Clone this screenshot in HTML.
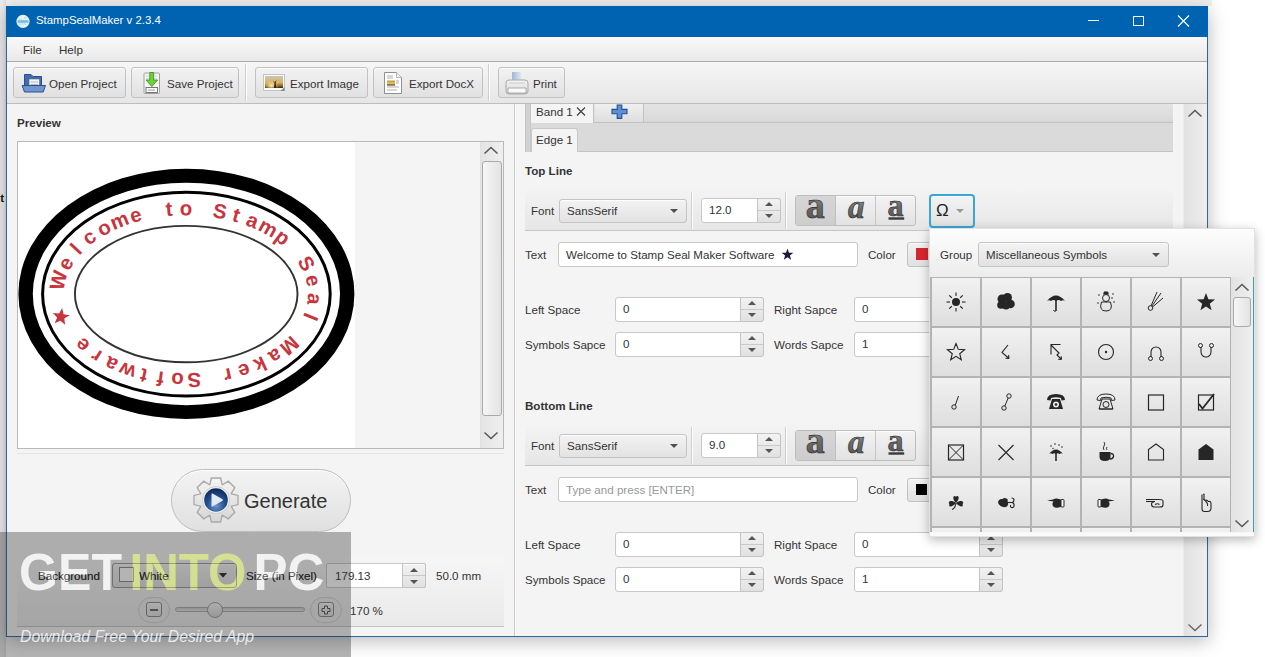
<!DOCTYPE html>
<html><head><meta charset="utf-8">
<style>
*{box-sizing:border-box;margin:0;padding:0}
html,body{width:1265px;height:657px;overflow:hidden;background:#fff;font-family:"Liberation Sans",sans-serif;font-size:11.6px;color:#333}
.a{position:absolute}
#bgl{left:0;top:0;width:6px;height:657px;background:linear-gradient(90deg,#ececef 55%,#dcdce0)}
#bgt{left:0;top:0;width:1212px;height:6px;background:#f0f0f0}
#win{left:6px;top:6px;width:1202px;height:631px;background:#f4f4f4;border:1px solid #2a6aa0;border-top:none;box-shadow:0 4px 18px rgba(0,0,0,.28)}
#title{left:6px;top:6px;width:1202px;height:31px;background:#0063b1;color:#fff;font-size:12px}
#menu{left:7px;top:37px;width:1200px;height:25px;background:linear-gradient(#f9f9f9,#e9e9e9);border-bottom:1px solid #aaa}
#tool{left:7px;top:62px;width:1200px;height:42px;background:linear-gradient(#f6f6f6,#e6e6e6);border-bottom:1px solid #bdbdbd}
.btn{position:absolute;border:1px solid #c2c2c2;border-radius:3px;background:linear-gradient(#f2f2f2,#e1e1e1);box-shadow:inset 0 1px 0 rgba(255,255,255,.7)}
.tb{top:67px;height:31px;font-size:11.6px;color:#333;line-height:29px}
.sep{position:absolute;width:2px;border-left:1px solid #cfcfcf;border-right:1px solid #fff}
.lbl{position:absolute;white-space:pre;color:#333}
.bold{font-weight:bold}
.field{position:absolute;background:#fff;border:1px solid #c8c8c8;border-radius:2px}

.cmb{position:absolute;border:1px solid #c4c4c4;border-radius:3px;background:linear-gradient(#f3f3f3,#e2e2e2);box-shadow:inset 0 1px 0 rgba(255,255,255,.8)}
.arr{position:absolute;width:0;height:0;border-left:4px solid transparent;border-right:4px solid transparent;border-top:4px solid #505050}
.spbtn{position:absolute;border:1px solid #c4c4c4;border-radius:0 3px 3px 0;background:linear-gradient(#f2f2f2,#e1e1e1)}
.up{position:absolute;width:0;height:0;border-left:4px solid transparent;border-right:4px solid transparent;border-bottom:4px solid #555}
.dn{position:absolute;width:0;height:0;border-left:4px solid transparent;border-right:4px solid transparent;border-top:4px solid #555}
</style></head><body>
<div class="a" id="bgt"></div>
<div class="a" id="bgl"></div>
<div class="a" id="win"></div>
<div class="lbl" style="left:-3px;top:191px;font-weight:bold;color:#111">it</div>
<div class="a" id="title">
  <svg class="a" style="left:10px;top:8px" width="15" height="15" viewBox="0 0 15 15"><circle cx="7" cy="7.3" r="6.6" fill="#e2f5fb"/><path d="M1.5 6.2h11v2.6h-11z" fill="#7fb9dc"/><path d="M3 5h3M8 4h3M3 10h7" stroke="#9fd2ea" stroke-width="0.8"/></svg>
  <div class="lbl" style="left:30px;top:8px;color:#fff;font-size:11.4px">StampSealMaker v 2.3.4</div>
  <div class="a" style="left:1082px;top:14px;width:11px;height:1px;background:#fff"></div>
  <div class="a" style="left:1127px;top:10px;width:11px;height:10px;border:1px solid #fff"></div>
  <svg class="a" style="left:1171px;top:9px" width="13" height="12"><path d="M1 0.5L12 11.5M12 0.5L1 11.5" stroke="#fff" stroke-width="1.1"/></svg>
</div>
<div class="a" id="menu">
  <div class="lbl" style="left:16px;top:6px">File</div>
  <div class="lbl" style="left:52px;top:6px">Help</div>
</div>
<div class="a" id="tool"></div>
<div class="btn tb" style="left:13px;width:113px"></div>
<div class="btn tb" style="left:131px;width:108px"></div>
<div class="sep" style="left:245px;top:64px;height:37px"></div>
<div class="btn tb" style="left:255px;width:113px"></div>
<div class="btn tb" style="left:373px;width:110px"></div>
<div class="sep" style="left:488px;top:64px;height:37px"></div>
<div class="btn tb" style="left:498px;width:67px"></div>
<!-- toolbar icons -->
<svg class="a" style="left:21px;top:72px" width="26" height="22" viewBox="0 0 26 22">
  <path d="M3.5 2.5h6.5l2 2h8.5v10H3.5z" fill="#3f6db5" stroke="#2a4f8c" stroke-width="1"/>
  <rect x="8" y="7" width="10.5" height="9" fill="#f4f6f8" stroke="#666" stroke-width="0.6"/>
  <path d="M9.5 10h7.5M9.5 12.5h7.5" stroke="#9ab" stroke-width="0.8"/>
  <path d="M1.2 13.5h23.3l-2.3 6.5H3.5z" fill="#7096cc" stroke="#2c4f8a" stroke-width="1"/>
</svg>
<div class="lbl" style="left:49px;top:77px">Open Project</div>
<svg class="a" style="left:143px;top:72px" width="18" height="22" viewBox="0 0 18 22">
  <rect x="1" y="1" width="15.5" height="20.5" rx="1" fill="#f4f4f4" stroke="#a0a0a0" stroke-width="1"/>
  <path d="M3 4h11M3 6.5h11" stroke="#cfcfcf" stroke-width="0.8"/>
  <path d="M6.8 0.5h3.8v7.5h4l-5.8 6.5l-5.8-6.5h3.8z" fill="#6fcf3c" stroke="#3d9a1e" stroke-width="0.9"/>
  <rect x="3" y="15.5" width="11.5" height="5" fill="#fafafa" stroke="#6a6a6a" stroke-width="0.9"/>
  <path d="M5 18h7" stroke="#888" stroke-width="0.8"/>
</svg>
<div class="lbl" style="left:167px;top:77px">Save Project</div>
<svg class="a" style="left:263px;top:74px" width="24" height="18" viewBox="0 0 24 18">
  <rect x="0.5" y="0.5" width="21" height="16" fill="#fbfbf8" stroke="#c4c4c4" stroke-width="1"/>
  <defs><linearGradient id="sun" x1="0" y1="0" x2="0" y2="1"><stop offset="0" stop-color="#c9c6bc"/><stop offset=".55" stop-color="#d9b260"/><stop offset=".85" stop-color="#7a5a20"/><stop offset="1" stop-color="#2a2008"/></linearGradient>
  <radialGradient id="glow" cx="0.35" cy="0.8" r="0.45"><stop offset="0" stop-color="#fff4c0" stop-opacity="1"/><stop offset="1" stop-color="#f0c060" stop-opacity="0"/></radialGradient></defs>
  <rect x="2" y="2" width="18" height="12" fill="url(#sun)"/>
  <rect x="2" y="2" width="18" height="12" fill="url(#glow)"/>
  <path d="M11 14l0.6-5l-1.8-2.5l2.2 1.8l1.5-2.5l-0.8 3.2l0.6 5z" fill="#2e2410"/>
  <path d="M17.5 17l4-4v4z" fill="#8a8a8a"/>
</svg>
<div class="lbl" style="left:290px;top:77px">Export Image</div>
<svg class="a" style="left:384px;top:72px" width="19" height="22" viewBox="0 0 19 22">
  <path d="M0.5 0.5h12l5 5v16H0.5z" fill="#fff" stroke="#8f8f8f" stroke-width="1"/>
  <path d="M12.5 0.5v5h5" fill="#eee" stroke="#aaa" stroke-width="0.8"/>
  <path d="M3 4h6M3 6h6M12 9h3M12 11h3M3 15h12M3 18h10" stroke="#999" stroke-width="0.8"/>
  <defs><linearGradient id="sun2" x1="0" y1="0" x2="0" y2="1"><stop offset="0" stop-color="#b99a4a"/><stop offset=".6" stop-color="#e8c060"/><stop offset="1" stop-color="#3a2a10"/></linearGradient></defs>
  <rect x="3" y="8.5" width="8" height="5" fill="url(#sun2)"/>
</svg>
<div class="lbl" style="left:409px;top:77px">Export DocX</div>
<svg class="a" style="left:505px;top:71px" width="24" height="25" viewBox="0 0 24 25">
  <defs><linearGradient id="pap" x1="0" y1="0" x2="1" y2="0"><stop offset="0" stop-color="#9db8d8"/><stop offset="1" stop-color="#dce8f2"/></linearGradient>
  <linearGradient id="prb" x1="0" y1="0" x2="0" y2="1"><stop offset="0" stop-color="#f4f4f4"/><stop offset="1" stop-color="#d8d8d8"/></linearGradient></defs>
  <rect x="7" y="1" width="9" height="8" fill="url(#pap)"/>
  <rect x="1" y="9" width="22" height="14" rx="3" fill="url(#prb)" stroke="#aaa" stroke-width="1"/>
  <path d="M3 17h18v5H3z" fill="#fafafa" stroke="#999" stroke-width="0.8"/>
  <path d="M4 12h16" stroke="#ccc" stroke-width="1"/>
</svg>
<div class="lbl" style="left:533px;top:77px">Print</div>

<!-- LEFT PANEL -->
<div class="a" style="left:514px;top:104px;width:1px;height:532px;background:#c8c8c8"></div>
<div class="a" style="left:515px;top:104px;width:1px;height:532px;background:#fbfbfb"></div>
<div class="lbl bold" style="left:17px;top:116px">Preview</div>
<div class="a" style="left:17px;top:141px;width:487px;height:308px;border:1px solid #b9b9b9;background:#f4f4f4"></div>
<div class="a" style="left:18px;top:142px;width:337px;height:306px;background:#fff"></div>
<svg class="a" style="left:0;top:0" width="360" height="450" viewBox="0 0 360 450">
  <path fill-rule="evenodd" fill="#000" d="M18.4,293.9 a168,125.1 0 1,0 336,0 a168,125.1 0 1,0 -336,0 Z M32.8,293.9 a153.6,111.2 0 1,0 307.2,0 a153.6,111.2 0 1,0 -307.2,0 Z"/>
  <ellipse cx="186.4" cy="294.1" rx="143.8" ry="101.9" fill="none" stroke="#000" stroke-width="3"/>
  <ellipse cx="186.2" cy="294.1" rx="111.3" ry="68.2" fill="none" stroke="#333" stroke-width="1.9"/>
  <g fill="#c9343d" font-family="Liberation Sans" font-weight="bold" font-size="20.4">
<text transform="translate(65.37,281.96) rotate(-76.39)" text-anchor="middle">W</text>
<text transform="translate(71.44,266.86) rotate(-60.33)" text-anchor="middle">e</text>
<text transform="translate(81.18,253.67) rotate(-47.29)" text-anchor="middle">l</text>
<text transform="translate(93.38,242.71) rotate(-36.99)" text-anchor="middle">c</text>
<text transform="translate(107.11,233.89) rotate(-28.71)" text-anchor="middle">o</text>
<text transform="translate(121.99,226.91) rotate(-21.71)" text-anchor="middle">m</text>
<text transform="translate(137.45,221.70) rotate(-15.65)" text-anchor="middle">e</text>
<text transform="translate(169.66,215.90) rotate(-4.97)" text-anchor="middle">t</text>
<text transform="translate(186.09,215.20) rotate(0.06)" text-anchor="middle">o</text>
<text transform="translate(218.65,218.10) rotate(10.23)" text-anchor="middle">S</text>
<text transform="translate(234.53,221.75) rotate(15.72)" text-anchor="middle">t</text>
<text transform="translate(249.97,226.97) rotate(21.78)" text-anchor="middle">a</text>
<text transform="translate(264.84,233.97) rotate(28.79)" text-anchor="middle">m</text>
<text transform="translate(278.54,242.80) rotate(37.08)" text-anchor="middle">p</text>
<text transform="translate(300.43,266.97) rotate(60.45)" text-anchor="middle">S</text>
<text transform="translate(306.46,282.09) rotate(76.52)" text-anchor="middle">e</text>
<text transform="translate(307.74,298.29) rotate(94.58)" text-anchor="middle">a</text>
<text transform="translate(303.92,314.21) rotate(112.01)" text-anchor="middle">l</text>
<text transform="translate(284.82,340.43) rotate(138.10)" text-anchor="middle">M</text>
<text transform="translate(271.76,350.32) rotate(147.32)" text-anchor="middle">a</text>
<text transform="translate(257.45,358.19) rotate(154.88)" text-anchor="middle">k</text>
<text transform="translate(242.14,364.31) rotate(161.41)" text-anchor="middle">e</text>
<text transform="translate(226.50,368.70) rotate(167.13)" text-anchor="middle">r</text>
<text transform="translate(193.94,373.03) rotate(177.55)" text-anchor="middle">S</text>
<text transform="translate(177.67,373.02) rotate(-177.49)" text-anchor="middle">o</text>
<text transform="translate(161.35,371.58) rotate(-172.42)" text-anchor="middle">f</text>
<text transform="translate(145.12,368.65) rotate(-167.06)" text-anchor="middle">t</text>
<text transform="translate(129.49,364.25) rotate(-161.34)" text-anchor="middle">w</text>
<text transform="translate(114.19,358.11) rotate(-154.80)" text-anchor="middle">a</text>
<text transform="translate(99.90,350.24) rotate(-147.24)" text-anchor="middle">r</text>
<text transform="translate(86.86,340.33) rotate(-138.01)" text-anchor="middle">e</text>
<polygon transform="translate(60.87,316.88)" points="1.25,-8.91 2.64,-2.73 8.86,-1.56 3.42,1.67 4.23,7.95 -0.53,3.76 -6.25,6.47 -3.74,0.66 -8.09,-3.95 -1.78,-3.36" fill="#c9343d"/>
  </g>
</svg>
<!-- preview scrollbar -->
<div class="a" style="left:480px;top:142px;width:23px;height:306px;background:linear-gradient(90deg,#e4e4e4,#efefef);border-left:1px solid #e0e0e0"></div>
<svg class="a" style="left:482px;top:144px" width="18" height="12" viewBox="0 0 18 12"><path d="M2.5 9.5L9 3.5L15.5 9.5" fill="none" stroke="#5a5a5a" stroke-width="1.6"/></svg>
<div class="a" style="left:482px;top:161px;width:20px;height:255px;border:1px solid #a9a9a9;border-radius:3px;background:linear-gradient(90deg,#f6f6f6,#e3e3e3)"></div>
<svg class="a" style="left:482px;top:430px" width="18" height="12" viewBox="0 0 18 12"><path d="M2.5 2.5L9 8.5L15.5 2.5" fill="none" stroke="#5a5a5a" stroke-width="1.6"/></svg>
<div class="a" style="left:17px;top:453px;width:487px;height:1px;background:#e6e6e6"></div>
<!-- generate -->
<div class="a" style="left:171px;top:469px;width:180px;height:63px;border:1px solid #bdbdbd;border-radius:32px;background:linear-gradient(#f3f3f3,#e0e0e0);box-shadow:inset 0 1px 0 #fff"></div>
<svg class="a" style="left:191px;top:475px" width="50" height="50" viewBox="-25 -25 50 50">
  <defs><radialGradient id="bl" cx="0.5" cy="0.75" r="0.7"><stop offset="0" stop-color="#6f95c8"/><stop offset=".55" stop-color="#24508f"/><stop offset="1" stop-color="#0f2d5e"/></radialGradient>
  <linearGradient id="gr" x1="0" y1="0" x2="0" y2="1"><stop offset="0" stop-color="#f4f4f4"/><stop offset="1" stop-color="#d6d6d6"/></linearGradient></defs>
  <path fill="url(#gr)" stroke="#a9a9a9" stroke-width="1.3" d="M15.29,-6.20 L22.02,-4.60 L22.02,4.60 L15.29,6.20 A16.5,16.5 0 0,1 15.20,6.43 L18.83,12.32 L12.32,18.83 L6.43,15.20 A16.5,16.5 0 0,1 6.20,15.29 L4.60,22.02 L-4.60,22.02 L-6.20,15.29 A16.5,16.5 0 0,1 -6.43,15.20 L-12.32,18.83 L-18.83,12.32 L-15.20,6.43 A16.5,16.5 0 0,1 -15.29,6.20 L-22.02,4.60 L-22.02,-4.60 L-15.29,-6.20 A16.5,16.5 0 0,1 -15.20,-6.43 L-18.83,-12.32 L-12.32,-18.83 L-6.43,-15.20 A16.5,16.5 0 0,1 -6.20,-15.29 L-4.60,-22.02 L4.60,-22.02 L6.20,-15.29 A16.5,16.5 0 0,1 6.43,-15.20 L12.32,-18.83 L18.83,-12.32 L15.20,-6.43 A16.5,16.5 0 0,1 15.29,-6.20 Z"/>
  <circle r="13.5" fill="#eef0f2" stroke="#c8c8c8" stroke-width="0.8"/>
  <circle r="11.8" fill="url(#bl)"/>
  <path d="M-3.5,-6.5 Q-4.5,-7 -4.5,-5.5 L-4.5,5.5 Q-4.5,7 -3.5,6.5 L6.5,0.8 Q7.5,0 6.5,-0.8 Z" fill="#e4eaf2"/>
</svg>
<div class="lbl" style="left:244px;top:490px;font-size:20px;color:#333">Generate</div>
<!-- bottom bar -->
<div class="a" style="left:17px;top:557px;width:487px;height:70px;background:linear-gradient(#f6f6f6,#e9e9e9);border-bottom:1px solid #c4c4c4"></div>
<div class="lbl" style="left:38px;top:569px">Background</div>
<div class="btn" style="left:112px;top:563px;width:125px;height:25px"></div>
<div class="a" style="left:119px;top:567px;width:15px;height:15px;background:#fff;border:1px solid #aaa"></div>
<div class="lbl" style="left:139px;top:569px">White</div>
<svg class="a" style="left:219px;top:573px" width="9" height="5"><path d="M0 0h8l-4 4.5z" fill="#444"/></svg>
<div class="lbl" style="left:246px;top:569px">Size (in Pixel)</div>
<div class="field" style="left:326px;top:563px;width:100px;height:25px"></div>
<div class="lbl" style="left:335px;top:569px">179.13</div>
<div class="btn" style="left:402px;top:563px;width:24px;height:25px;border-radius:0 2px 2px 0"></div>
<div class="a" style="left:403px;top:575px;width:22px;height:1px;background:#c8c8c8"></div>
<svg class="a" style="left:409px;top:567px" width="10" height="18"><path d="M1 5h8l-4-4z" fill="#555"/><path d="M1 13h8l-4 4z" fill="#555"/></svg>
<div class="lbl" style="left:436px;top:569px">50.0 mm</div>
<div class="a" style="left:138px;top:597px;width:32px;height:26px;border-radius:13px;border:1px solid #d0d0d0;background:#ececec"></div>
<div class="btn" style="left:146px;top:602px;width:16px;height:15px;border-color:#888;border-radius:3px"></div>
<div class="a" style="left:150px;top:609px;width:8px;height:2px;border:1px solid #666"></div>
<div class="a" style="left:175px;top:607px;width:130px;height:5px;border-radius:3px;background:linear-gradient(#c9c9c9,#e2e2e2);border:1px solid #aaa"></div>
<div class="a" style="left:207px;top:602px;width:16px;height:16px;border-radius:50%;border:1px solid #999;background:linear-gradient(#f4f4f4,#d4d4d4)"></div>
<div class="a" style="left:310px;top:597px;width:32px;height:26px;border-radius:13px;border:1px solid #d0d0d0;background:#ececec"></div>
<div class="btn" style="left:318px;top:602px;width:16px;height:15px;border-color:#888;border-radius:3px"></div>
<svg class="a" style="left:321px;top:605px" width="10" height="10"><path d="M3.5 1h3v2.5H9v3H6.5V9h-3V6.5H1v-3h2.5z" fill="none" stroke="#555" stroke-width="1"/></svg>
<div class="lbl" style="left:350px;top:604px">170 %</div>

<!-- RIGHT PANEL -->
<div class="a" style="left:525px;top:104px;width:648px;height:19px;background:linear-gradient(#e4e4e4,#d8d8d8);border-bottom:1px solid #c2c2c2"></div>
<div class="a" style="left:525px;top:104px;width:6px;height:48px;background:#d2d2d2;border-left:1px solid #c6c6c6;border-right:1px solid #c6c6c6"></div>
<div class="a" style="left:531px;top:104px;width:63px;height:19px;background:#f4f4f4;border-right:1px solid #c6c6c6"></div>
<div class="lbl" style="left:536px;top:105px">Band 1</div>
<svg class="a" style="left:576px;top:107px" width="10" height="9"><path d="M1 0.5L9 8.5M9 0.5L1 8.5" stroke="#3c3c3c" stroke-width="1.1"/></svg>
<div class="a" style="left:595px;top:104px;width:49px;height:18px;background:linear-gradient(#f0f0f0,#dedede);border-right:1px solid #c2c2c2"></div>
<svg class="a" style="left:611px;top:104px" width="17" height="15" viewBox="0 0 17 15"><path d="M6.2 1h4.6v4.4h5.2v4.4h-5.2v4.6h-4.6v-4.6h-5.2v-4.4h5.2z" fill="#5b8fd6" stroke="#234f94" stroke-width="1.1"/></svg>
<div class="a" style="left:525px;top:123px;width:648px;height:29px;background:#dadada;border-bottom:1px solid #c4c4c4"></div>
<div class="a" style="left:525px;top:123px;width:6px;height:29px;background:#d2d2d2;border-left:1px solid #c6c6c6;border-right:1px solid #c6c6c6"></div>
<div class="a" style="left:531px;top:128px;width:47px;height:24px;background:#f4f4f4;border:1px solid #c8c8c8;border-bottom:none;border-radius:3px 3px 0 0"></div>
<div class="lbl" style="left:536px;top:133px">Edge 1</div>
<div class="lbl bold" style="left:525px;top:164px">Top Line</div>
<div class="a" style="left:525px;top:188px;width:648px;height:43px;background:linear-gradient(rgba(255,255,255,0),#e6e6e6);border-bottom:1px solid #c6c6c6"></div>
<div class="lbl" style="left:531px;top:204px">Font</div>
<div class="cmb" style="left:559px;top:199px;width:128px;height:24px"></div>
<div class="lbl" style="left:567px;top:204px">SansSerif</div>
<div class="arr" style="left:670px;top:209px"></div>
<div class="sep" style="left:691px;top:192px;height:37px"></div>
<div class="field" style="left:701px;top:198px;width:80px;height:25px;border-radius:3px"></div>
<div class="spbtn" style="left:757px;top:198px;width:24px;height:25px"></div>
<div class="a" style="left:758px;top:210px;width:22px;height:1px;background:#c9c9c9"></div>
<div class="up" style="left:765px;top:202px"></div>
<div class="dn" style="left:765px;top:214px"></div>
<div class="lbl" style="left:709px;top:203px;color:#333">12.0</div>
<div class="sep" style="left:785px;top:192px;height:37px"></div>
<div class="cmb" style="left:795px;top:195px;width:121px;height:31px;border-color:#bdbdbd"></div>
<div class="a" style="left:796px;top:196px;width:40px;height:29px;background:linear-gradient(#d6d6d6,#cdcdcd);border-right:1px solid #c0c0c0"></div>
<div class="a" style="left:875px;top:196px;width:1px;height:29px;background:#c6c6c6"></div>
<svg class="a" style="left:796px;top:196px" width="120" height="30" viewBox="0 0 120 30"><defs><linearGradient id="ag196" x1="0" y1="0" x2="0" y2="1"><stop offset="0" stop-color="#b0b0b0"/><stop offset=".55" stop-color="#6a6a6a"/><stop offset="1" stop-color="#505050"/></linearGradient></defs>
<g fill="url(#ag196)" stroke="#2a2a2a" stroke-width="0.6" font-family="Liberation Serif" font-weight="bold"><text x="9.8" y="21.8" font-size="38">a</text><text x="52" y="21.8" font-size="33" font-style="italic">a</text><text x="91.5" y="19.5" font-size="32">a</text></g>
<rect x="92.5" y="21.3" width="15.7" height="2.4" fill="#3a3a3a"/></svg>

<div class="cmb" style="left:929px;top:194px;width:46px;height:34px;border:2px solid #3aa6d6;border-radius:4px"></div>
<div class="lbl" style="left:936px;top:201px;font-size:17px;color:#222">&#937;</div>
<div class="arr" style="left:956px;top:209px;border-top-color:#999"></div>
<div class="lbl" style="left:525px;top:248px">Text</div>
<div class="field" style="left:558px;top:242px;width:300px;height:25px;border-radius:3px"></div>
<div class="lbl" style="left:566px;top:248px">Welcome to Stamp Seal Maker Software</div>
<svg class="a" style="left:781px;top:248px" width="13" height="13" viewBox="0 0 14 14"><polygon points="7,0.5 8.6,5 13.3,5.1 9.6,8 10.9,12.6 7,9.9 3.1,12.6 4.4,8 0.7,5.1 5.4,5" fill="#1c1c3a"/></svg>
<div class="lbl" style="left:868px;top:248px">Color</div>
<div class="btn" style="left:907px;top:242px;width:40px;height:25px"></div>
<div class="a" style="left:916px;top:248px;width:12px;height:12px;background:#d8262e"></div>
<div class="lbl" style="left:525px;top:303px">Left Space</div>
<div class="field" style="left:615px;top:297px;width:149px;height:25px;border-radius:3px"></div>
<div class="spbtn" style="left:740px;top:297px;width:24px;height:25px"></div>
<div class="a" style="left:741px;top:309px;width:22px;height:1px;background:#c9c9c9"></div>
<div class="up" style="left:748px;top:301px"></div>
<div class="dn" style="left:748px;top:313px"></div>
<div class="lbl" style="left:623px;top:302px;color:#333">0</div>

<div class="lbl" style="left:774px;top:303px">Right Sapce</div>
<div class="field" style="left:854px;top:297px;width:149px;height:25px;border-radius:3px"></div>
<div class="spbtn" style="left:979px;top:297px;width:24px;height:25px"></div>
<div class="a" style="left:980px;top:309px;width:22px;height:1px;background:#c9c9c9"></div>
<div class="up" style="left:987px;top:301px"></div>
<div class="dn" style="left:987px;top:313px"></div>
<div class="lbl" style="left:862px;top:302px;color:#333">0</div>

<div class="lbl" style="left:525px;top:338px">Symbols Sapce</div>
<div class="field" style="left:615px;top:332px;width:149px;height:25px;border-radius:3px"></div>
<div class="spbtn" style="left:740px;top:332px;width:24px;height:25px"></div>
<div class="a" style="left:741px;top:344px;width:22px;height:1px;background:#c9c9c9"></div>
<div class="up" style="left:748px;top:336px"></div>
<div class="dn" style="left:748px;top:348px"></div>
<div class="lbl" style="left:623px;top:337px;color:#333">0</div>

<div class="lbl" style="left:774px;top:338px">Words Sapce</div>
<div class="field" style="left:854px;top:332px;width:149px;height:25px;border-radius:3px"></div>
<div class="spbtn" style="left:979px;top:332px;width:24px;height:25px"></div>
<div class="a" style="left:980px;top:344px;width:22px;height:1px;background:#c9c9c9"></div>
<div class="up" style="left:987px;top:336px"></div>
<div class="dn" style="left:987px;top:348px"></div>
<div class="lbl" style="left:862px;top:337px;color:#333">1</div>

<div class="lbl bold" style="left:525px;top:399px">Bottom Line</div>
<div class="a" style="left:525px;top:423px;width:648px;height:43px;background:linear-gradient(rgba(255,255,255,0),#e6e6e6);border-bottom:1px solid #c6c6c6"></div>
<div class="lbl" style="left:531px;top:439px">Font</div>
<div class="cmb" style="left:559px;top:434px;width:128px;height:24px"></div>
<div class="lbl" style="left:567px;top:439px">SansSerif</div>
<div class="arr" style="left:670px;top:444px"></div>
<div class="sep" style="left:691px;top:427px;height:37px"></div>
<div class="field" style="left:701px;top:433px;width:80px;height:25px;border-radius:3px"></div>
<div class="spbtn" style="left:757px;top:433px;width:24px;height:25px"></div>
<div class="a" style="left:758px;top:445px;width:22px;height:1px;background:#c9c9c9"></div>
<div class="up" style="left:765px;top:437px"></div>
<div class="dn" style="left:765px;top:449px"></div>
<div class="lbl" style="left:709px;top:438px;color:#333">9.0</div>
<div class="sep" style="left:785px;top:427px;height:37px"></div>
<div class="cmb" style="left:795px;top:430px;width:121px;height:31px;border-color:#bdbdbd"></div>
<div class="a" style="left:796px;top:431px;width:40px;height:29px;background:linear-gradient(#d6d6d6,#cdcdcd);border-right:1px solid #c0c0c0"></div>
<div class="a" style="left:875px;top:431px;width:1px;height:29px;background:#c6c6c6"></div>
<svg class="a" style="left:796px;top:431px" width="120" height="30" viewBox="0 0 120 30"><defs><linearGradient id="ag431" x1="0" y1="0" x2="0" y2="1"><stop offset="0" stop-color="#b0b0b0"/><stop offset=".55" stop-color="#6a6a6a"/><stop offset="1" stop-color="#505050"/></linearGradient></defs>
<g fill="url(#ag431)" stroke="#2a2a2a" stroke-width="0.6" font-family="Liberation Serif" font-weight="bold"><text x="9.8" y="21.8" font-size="38">a</text><text x="52" y="21.8" font-size="33" font-style="italic">a</text><text x="91.5" y="19.5" font-size="32">a</text></g>
<rect x="92.5" y="21.3" width="15.7" height="2.4" fill="#3a3a3a"/></svg>

<div class="lbl" style="left:525px;top:483px">Text</div>
<div class="field" style="left:558px;top:477px;width:300px;height:25px;border-radius:3px"></div>
<div class="lbl" style="left:566px;top:483px;color:#999">Type and press [ENTER]</div>
<div class="lbl" style="left:868px;top:483px">Color</div>
<div class="btn" style="left:907px;top:478px;width:40px;height:24px"></div>
<div class="a" style="left:916px;top:484px;width:11px;height:11px;background:#000"></div>
<div class="lbl" style="left:525px;top:538px">Left Space</div>
<div class="field" style="left:615px;top:532px;width:149px;height:25px;border-radius:3px"></div>
<div class="spbtn" style="left:740px;top:532px;width:24px;height:25px"></div>
<div class="a" style="left:741px;top:544px;width:22px;height:1px;background:#c9c9c9"></div>
<div class="up" style="left:748px;top:536px"></div>
<div class="dn" style="left:748px;top:548px"></div>
<div class="lbl" style="left:623px;top:537px;color:#333">0</div>

<div class="lbl" style="left:774px;top:538px">Right Space</div>
<div class="field" style="left:854px;top:532px;width:149px;height:25px;border-radius:3px"></div>
<div class="spbtn" style="left:979px;top:532px;width:24px;height:25px"></div>
<div class="a" style="left:980px;top:544px;width:22px;height:1px;background:#c9c9c9"></div>
<div class="up" style="left:987px;top:536px"></div>
<div class="dn" style="left:987px;top:548px"></div>
<div class="lbl" style="left:862px;top:537px;color:#333">0</div>

<div class="lbl" style="left:525px;top:573px">Symbols Space</div>
<div class="field" style="left:615px;top:567px;width:149px;height:25px;border-radius:3px"></div>
<div class="spbtn" style="left:740px;top:567px;width:24px;height:25px"></div>
<div class="a" style="left:741px;top:579px;width:22px;height:1px;background:#c9c9c9"></div>
<div class="up" style="left:748px;top:571px"></div>
<div class="dn" style="left:748px;top:583px"></div>
<div class="lbl" style="left:623px;top:572px;color:#333">0</div>

<div class="lbl" style="left:774px;top:573px">Words Space</div>
<div class="field" style="left:854px;top:567px;width:149px;height:25px;border-radius:3px"></div>
<div class="spbtn" style="left:979px;top:567px;width:24px;height:25px"></div>
<div class="a" style="left:980px;top:579px;width:22px;height:1px;background:#c9c9c9"></div>
<div class="up" style="left:987px;top:571px"></div>
<div class="dn" style="left:987px;top:583px"></div>
<div class="lbl" style="left:862px;top:572px;color:#333">1</div>

<!-- right scrollbar -->
<div class="a" style="left:1183px;top:104px;width:24px;height:532px;background:linear-gradient(90deg,#e2e2e2,#eeeeee);border-left:1px solid #ececec"></div>
<svg class="a" style="left:1186px;top:107px" width="18" height="12" viewBox="0 0 18 12"><path d="M2.5 9.5L9 3.5L15.5 9.5" fill="none" stroke="#5a5a5a" stroke-width="1.6"/></svg>
<svg class="a" style="left:1186px;top:622px" width="18" height="12" viewBox="0 0 18 12"><path d="M2.5 2.5L9 8.5L15.5 2.5" fill="none" stroke="#6a6a6a" stroke-width="1.5"/></svg>
<div class="a" style="left:929px;top:228px;width:326px;height:309px;background:linear-gradient(#fdfdfd,#ececec 48px,#ececec 302px,#fafafa 304px);box-shadow:0 3px 10px rgba(0,0,0,.28);border:1px solid #e2e2e2"></div>
<div class="lbl" style="left:940px;top:248px">Group</div>
<div class="cmb" style="left:978px;top:242px;width:191px;height:25px"></div>
<div class="lbl" style="left:986px;top:248px">Miscellaneous Symbols</div>
<div class="arr" style="left:1152px;top:253px"></div>
<div class="a" style="left:930px;top:277px;width:324px;height:255px;background:#b3b3b3;overflow:hidden">
<div class="a" style="left:2px;top:1px;width:48px;height:48px;background:linear-gradient(#f1f1f1,#dedede)"></div>
<div class="a" style="left:52px;top:1px;width:48px;height:48px;background:linear-gradient(#f1f1f1,#dedede)"></div>
<div class="a" style="left:102px;top:1px;width:48px;height:48px;background:linear-gradient(#f1f1f1,#dedede)"></div>
<div class="a" style="left:152px;top:1px;width:48px;height:48px;background:linear-gradient(#f1f1f1,#dedede)"></div>
<div class="a" style="left:202px;top:1px;width:48px;height:48px;background:linear-gradient(#f1f1f1,#dedede)"></div>
<div class="a" style="left:252px;top:1px;width:48px;height:48px;background:linear-gradient(#f1f1f1,#dedede)"></div>
<div class="a" style="left:2px;top:51px;width:48px;height:48px;background:linear-gradient(#f1f1f1,#dedede)"></div>
<div class="a" style="left:52px;top:51px;width:48px;height:48px;background:linear-gradient(#f1f1f1,#dedede)"></div>
<div class="a" style="left:102px;top:51px;width:48px;height:48px;background:linear-gradient(#f1f1f1,#dedede)"></div>
<div class="a" style="left:152px;top:51px;width:48px;height:48px;background:linear-gradient(#f1f1f1,#dedede)"></div>
<div class="a" style="left:202px;top:51px;width:48px;height:48px;background:linear-gradient(#f1f1f1,#dedede)"></div>
<div class="a" style="left:252px;top:51px;width:48px;height:48px;background:linear-gradient(#f1f1f1,#dedede)"></div>
<div class="a" style="left:2px;top:101px;width:48px;height:48px;background:linear-gradient(#f1f1f1,#dedede)"></div>
<div class="a" style="left:52px;top:101px;width:48px;height:48px;background:linear-gradient(#f1f1f1,#dedede)"></div>
<div class="a" style="left:102px;top:101px;width:48px;height:48px;background:linear-gradient(#f1f1f1,#dedede)"></div>
<div class="a" style="left:152px;top:101px;width:48px;height:48px;background:linear-gradient(#f1f1f1,#dedede)"></div>
<div class="a" style="left:202px;top:101px;width:48px;height:48px;background:linear-gradient(#f1f1f1,#dedede)"></div>
<div class="a" style="left:252px;top:101px;width:48px;height:48px;background:linear-gradient(#f1f1f1,#dedede)"></div>
<div class="a" style="left:2px;top:151px;width:48px;height:48px;background:linear-gradient(#f1f1f1,#dedede)"></div>
<div class="a" style="left:52px;top:151px;width:48px;height:48px;background:linear-gradient(#f1f1f1,#dedede)"></div>
<div class="a" style="left:102px;top:151px;width:48px;height:48px;background:linear-gradient(#f1f1f1,#dedede)"></div>
<div class="a" style="left:152px;top:151px;width:48px;height:48px;background:linear-gradient(#f1f1f1,#dedede)"></div>
<div class="a" style="left:202px;top:151px;width:48px;height:48px;background:linear-gradient(#f1f1f1,#dedede)"></div>
<div class="a" style="left:252px;top:151px;width:48px;height:48px;background:linear-gradient(#f1f1f1,#dedede)"></div>
<div class="a" style="left:2px;top:201px;width:48px;height:48px;background:linear-gradient(#f1f1f1,#dedede)"></div>
<div class="a" style="left:52px;top:201px;width:48px;height:48px;background:linear-gradient(#f1f1f1,#dedede)"></div>
<div class="a" style="left:102px;top:201px;width:48px;height:48px;background:linear-gradient(#f1f1f1,#dedede)"></div>
<div class="a" style="left:152px;top:201px;width:48px;height:48px;background:linear-gradient(#f1f1f1,#dedede)"></div>
<div class="a" style="left:202px;top:201px;width:48px;height:48px;background:linear-gradient(#f1f1f1,#dedede)"></div>
<div class="a" style="left:252px;top:201px;width:48px;height:48px;background:linear-gradient(#f1f1f1,#dedede)"></div>
<div class="a" style="left:2px;top:251px;width:48px;height:48px;background:linear-gradient(#f1f1f1,#dedede)"></div>
<div class="a" style="left:52px;top:251px;width:48px;height:48px;background:linear-gradient(#f1f1f1,#dedede)"></div>
<div class="a" style="left:102px;top:251px;width:48px;height:48px;background:linear-gradient(#f1f1f1,#dedede)"></div>
<div class="a" style="left:152px;top:251px;width:48px;height:48px;background:linear-gradient(#f1f1f1,#dedede)"></div>
<div class="a" style="left:202px;top:251px;width:48px;height:48px;background:linear-gradient(#f1f1f1,#dedede)"></div>
<div class="a" style="left:252px;top:251px;width:48px;height:48px;background:linear-gradient(#f1f1f1,#dedede)"></div>
</div>
<svg class="a" style="left:932px;top:278px" width="300" height="253" viewBox="0 0 300 253"><g transform="translate(0,0)"><circle cx="24" cy="24" r="4" fill="#262626"/><line x1="30.00" y1="24.00" x2="33.50" y2="24.00" stroke="#262626" stroke-width="1.1"/><line x1="28.24" y1="28.24" x2="30.72" y2="30.72" stroke="#262626" stroke-width="1.1"/><line x1="24.00" y1="30.00" x2="24.00" y2="33.50" stroke="#262626" stroke-width="1.1"/><line x1="19.76" y1="28.24" x2="17.28" y2="30.72" stroke="#262626" stroke-width="1.1"/><line x1="18.00" y1="24.00" x2="14.50" y2="24.00" stroke="#262626" stroke-width="1.1"/><line x1="19.76" y1="19.76" x2="17.28" y2="17.28" stroke="#262626" stroke-width="1.1"/><line x1="24.00" y1="18.00" x2="24.00" y2="14.50" stroke="#262626" stroke-width="1.1"/><line x1="28.24" y1="19.76" x2="30.72" y2="17.28" stroke="#262626" stroke-width="1.1"/></g><g transform="translate(50,0)"><g fill="#262626"><circle cx="20" cy="21" r="4.5"/><circle cx="25.5" cy="19.5" r="4.5"/><circle cx="28.5" cy="26" r="4.3"/><circle cx="19" cy="27" r="3.8"/><circle cx="24" cy="27.5" r="4"/></g></g><g transform="translate(100,0)"><path d="M15 23 Q24 12 33 23 Q31 21.5 29 23 Q26.5 21 24 23 Q21.5 21 19 23 Q17 21.5 15 23Z" fill="#262626"/><path d="M24 22v11" stroke="#262626" stroke-width="1.6"/><path d="M24 33q-2 1 -2.5 -1" stroke="#262626" stroke-width="1" fill="none"/></g><g transform="translate(150,0)"><g fill="none" stroke="#262626" stroke-width="1"><circle cx="24" cy="20" r="3.5"/><path d="M19.5 24 Q16.5 33 24 33 Q31.5 33 28.5 24Z"/></g><path d="M21 16.5h6l-1 -3h-4z" fill="#262626"/><g fill="#262626"><circle cx="17" cy="17" r=".8"/><circle cx="31" cy="16" r=".8"/><circle cx="16" cy="25" r=".8"/><circle cx="32" cy="24" r=".8"/><circle cx="30" cy="20" r=".8"/></g></g><g transform="translate(200,0)"><g fill="none" stroke="#262626" stroke-width="1"><circle cx="18.5" cy="30" r="2.3"/><path d="M20 28L29 15M20.5 29L31 20M19 28L25 14"/></g></g><g transform="translate(250,0)"><polygon points="24.00,15.00 26.35,21.26 33.04,21.56 27.80,25.74 29.58,32.19 24.00,28.50 18.42,32.19 20.20,25.74 14.96,21.56 21.65,21.26" fill="#262626"/></g><g transform="translate(0,50)"><polygon points="24.00,15.50 26.29,21.34 32.56,21.72 27.71,25.71 29.29,31.78 24.00,28.40 18.71,31.78 20.29,25.71 15.44,21.72 21.71,21.34" fill="none" stroke="#262626" stroke-width="1.1"/></g><g transform="translate(50,50)"><path d="M26 17L20 24.5L27 30.5M27 30.5l-3.5 -0.2M27 30.5l-0.5 -3.3" fill="none" stroke="#262626" stroke-width="1.1"/></g><g transform="translate(100,50)"><path d="M28.5 16.5H19v10M19 17l8 8l-2 2l4.5 4.5M29.5 31.5l-3.3 -.3M29.5 31.5l-.3 -3.3" fill="none" stroke="#262626" stroke-width="1.1"/></g><g transform="translate(150,50)"><circle cx="24" cy="24" r="7.5" fill="none" stroke="#262626" stroke-width="1.1"/><circle cx="24" cy="24" r="1.2" fill="#262626"/></g><g transform="translate(200,50)"><path d="M19 29 V24 a5 5 0 0 1 10 0 V29" fill="none" stroke="#262626" stroke-width="1.1"/><circle cx="18.5" cy="30.5" r="2" fill="none" stroke="#262626" stroke-width="1"/><circle cx="29.5" cy="30.5" r="2" fill="none" stroke="#262626" stroke-width="1"/></g><g transform="translate(250,50)"><path d="M19 19 V24 a5 5 0 0 0 10 0 V19" fill="none" stroke="#262626" stroke-width="1.1"/><circle cx="18.5" cy="17.5" r="2" fill="none" stroke="#262626" stroke-width="1"/><circle cx="29.5" cy="17.5" r="2" fill="none" stroke="#262626" stroke-width="1"/></g><g transform="translate(0,100)"><circle cx="22" cy="29" r="2.2" fill="none" stroke="#262626" stroke-width="1"/><path d="M23.3 27.2L26.5 18" stroke="#262626" stroke-width="1"/></g><g transform="translate(50,100)"><circle cx="22" cy="30" r="2.2" fill="none" stroke="#262626" stroke-width="1"/><circle cx="27" cy="18" r="2.2" fill="none" stroke="#262626" stroke-width="1"/><path d="M22.8 28L26.2 20" stroke="#262626" stroke-width="1"/></g><g transform="translate(100,100)"><path d="M15 22 Q15 16 24 16 Q33 16 33 22 L29.5 22.5 L29 20 Q24 18.5 19 20 L18.5 22.5Z" fill="#262626"/><path d="M20 21h8l3 10H17z" fill="#262626"/><circle cx="24" cy="26.5" r="3" fill="#e8e8e8"/><circle cx="24" cy="26.5" r="1.3" fill="#262626"/></g><g transform="translate(150,100)"><g fill="none" stroke="#262626" stroke-width="1"><path d="M15 22 Q15 16 24 16 Q33 16 33 22 L29.5 22.5 L29 20 Q24 18.5 19 20 L18.5 22.5Z"/><path d="M20 21h8l3 10H17z"/><circle cx="24" cy="26.5" r="3"/><path d="M17 31h14"/></g></g><g transform="translate(200,100)"><rect x="16.5" y="17" width="15" height="15" fill="none" stroke="#262626" stroke-width="1.2"/></g><g transform="translate(250,100)"><rect x="16.5" y="17" width="15" height="15" fill="none" stroke="#262626" stroke-width="1.2"/><path d="M17 26l3.5 4.5L32 16" fill="none" stroke="#262626" stroke-width="1.8"/></g><g transform="translate(0,150)"><rect x="16.5" y="17" width="15" height="15" fill="none" stroke="#262626" stroke-width="1.2"/><path d="M17 17.5L31 31.5M31 17.5L17 31.5" stroke="#262626" stroke-width="1"/></g><g transform="translate(50,150)"><path d="M16.5 17L31.5 32M31.5 17L16.5 32" stroke="#262626" stroke-width="1.1"/></g><g transform="translate(100,150)"><path d="M17 26 Q24 17 31 26 Q29.5 24.5 27.5 26 Q25.5 24.5 24 26 Q22.5 24.5 20.5 26 Q18.5 24.5 17 26Z" fill="#262626"/><path d="M24 25v8" stroke="#262626" stroke-width="1.6"/><g fill="#262626"><circle cx="19" cy="18" r=".8"/><circle cx="23" cy="16" r=".8"/><circle cx="27" cy="17" r=".8"/><circle cx="30" cy="19" r=".8"/><circle cx="21" cy="20.5" r=".7"/></g></g><g transform="translate(150,150)"><path d="M17.5 24h11v5q0 4 -5.5 4q-5.5 0 -5.5 -4z" fill="#262626"/><path d="M28.5 25.5q3.5 0 3 3q-.5 2.5 -3.5 2.5" fill="none" stroke="#262626" stroke-width="1.3"/><path d="M22 22q-1.5 -2 0 -4q1.5 -2 0 -4M25 22q-1.2 -1.5 0 -3" fill="none" stroke="#262626" stroke-width="0.9"/></g><g transform="translate(200,150)"><path d="M16.5 32V21.5L24 16l7.5 5.5V32z" fill="none" stroke="#262626" stroke-width="1.1"/></g><g transform="translate(250,150)"><path d="M16.5 32V21.5L24 16l7.5 5.5V32z" fill="#262626"/></g><g transform="translate(0,200)"><g fill="#262626"><path d="M24 25 C21 22 20.5 18.5 22.5 18 C23.5 17.8 24 18.8 24 18.8 C24 18.8 24.5 17.8 25.5 18 C27.5 18.5 27 22 24 25Z"/><path d="M24 25 C20.5 22.5 17 22.5 16.8 24.8 C16.7 25.8 17.6 26 17.6 26 C17.6 26 16.8 26.8 17.2 27.8 C18 29.5 21.5 28 24 25Z"/><path d="M24 25 C27.5 22.5 31 22.5 31.2 24.8 C31.3 25.8 30.4 26 30.4 26 C30.4 26 31.2 26.8 30.8 27.8 C30 29.5 26.5 28 24 25Z"/></g><path d="M24 25 Q23.5 30 20 31.5" fill="none" stroke="#262626" stroke-width="1.1"/></g><g transform="translate(50,200)"><path d="M16 24 Q17 20.5 20.5 21 Q22 19.5 24.5 20.5 Q26.5 21.5 25.5 24 Q27 26 25 28.5 Q21.5 30 18.5 28 Q16 26.5 16 24Z" fill="#262626"/><path d="M24 24.5 H31" stroke="#262626" stroke-width="1.1"/><path d="M29.5 20 Q32 20 32 22 Q32 23.5 30.5 24.5 Q32.5 25.5 32 28 Q31.5 30 29.5 29.5 Q28 29 28.5 27" fill="none" stroke="#262626" stroke-width="1.1"/></g><g transform="translate(100,200)"><path d="M15 22.5 L21 21.5 Q24 20 27 21 L29 21.5 L29 29 L25 29.7 Q21.5 30 20.5 27 Q20 24.5 21.5 23.5 Z" fill="#262626"/><rect x="29" y="21.5" width="3" height="7.5" rx=".8" fill="#f6f6f6" stroke="#262626" stroke-width="1"/></g><g transform="translate(150,200)"><path d="M33 22.5 L27 21.5 Q24 20 21 21 L19 21.5 L19 29 L23 29.7 Q26.5 30 27.5 27 Q28 24.5 26.5 23.5 Z" fill="#262626"/><rect x="16" y="21.5" width="3" height="7.5" rx=".8" fill="#f6f6f6" stroke="#262626" stroke-width="1"/></g><g transform="translate(200,200)"><g fill="none" stroke="#262626" stroke-width="1.1"><path d="M14 21.5 H27 Q31 21.5 31 23 V27 Q31 29 28 29 H22 Q19.5 29 19.5 26 Q19.5 24 22 24"/><path d="M14 23.5 H23"/><path d="M23 26.5 Q25.5 25 27.5 26.5"/></g></g><g transform="translate(250,200)"><g fill="none" stroke="#262626" stroke-width="1.1"><path d="M20 16.5 V31 Q20 33.5 22.5 33.5 H25.5 Q29 33.5 29 30 V25.5 Q29 23 26.5 23.5 Q25 21.5 23 22.5 L21.5 21"/><path d="M21 16.3 H22 V22"/><path d="M23.5 23 Q26 25 25.5 28"/></g></g></svg>
<div class="a" style="left:1231px;top:277px;width:22px;height:255px;background:linear-gradient(90deg,#e2e2e2,#efefef)"></div>
<svg class="a" style="left:1233px;top:281px" width="18" height="12" viewBox="0 0 18 12"><path d="M2.5 9.5L9 3.5L15.5 9.5" fill="none" stroke="#5a5a5a" stroke-width="1.6"/></svg>
<div class="a" style="left:1233px;top:297px;width:18px;height:30px;border:1px solid #a9a9a9;border-radius:3px;background:linear-gradient(90deg,#f6f6f6,#e3e3e3)"></div>
<svg class="a" style="left:1233px;top:518px" width="18" height="12" viewBox="0 0 18 12"><path d="M2.5 2.5L9 8.5L15.5 2.5" fill="none" stroke="#5a5a5a" stroke-width="1.6"/></svg>
<div class="a" style="left:1253px;top:277px;width:1px;height:255px;background:#3a9bd0"></div>

<!-- WATERMARK -->
<div class="a" style="left:0;top:532px;width:351px;height:125px;background:rgba(40,40,40,0.35)"></div>
<svg class="a" style="left:0;top:532px" width="351" height="125" viewBox="0 532 351 125">
  <g font-family="Liberation Sans" font-weight="bold" font-size="52">
    <text x="19" y="590.3" fill="rgba(255,255,255,0.84)" textLength="103" lengthAdjust="spacingAndGlyphs">GET</text>
    <text x="129.5" y="590.3" fill="rgba(224,238,140,0.78)" textLength="117" lengthAdjust="spacingAndGlyphs">INTO</text>
    <text x="253.5" y="590.3" fill="rgba(255,255,255,0.84)" textLength="71" lengthAdjust="spacingAndGlyphs">PC</text>
  </g>
</svg>
<div class="a" style="left:0;top:532px;width:351px;height:125px;overflow:hidden">
  <div class="lbl" style="left:38px;top:37px;color:rgba(35,35,35,0.72)">Background</div>
  <div class="a" style="left:112px;top:31px;width:125px;height:25px;border:1px solid rgba(60,60,60,0.35);border-radius:3px"></div>
  <div class="a" style="left:119px;top:35px;width:15px;height:15px;border:1px solid rgba(60,60,60,0.35)"></div>
  <div class="lbl" style="left:139px;top:37px;color:rgba(35,35,35,0.72)">White</div>
  <svg class="a" style="left:219px;top:41px" width="9" height="5"><path d="M0 0h8l-4 4.5z" fill="rgba(35,35,35,0.72)"/></svg>
  <div class="lbl" style="left:246px;top:37px;color:rgba(35,35,35,0.72)">Size (in Pixel)</div>
</div>
<svg class="a" style="left:0;top:532px" width="351" height="125" viewBox="0 532 351 125">
  <text x="20" y="641.8" font-family="Liberation Sans" font-style="italic" font-size="15.6" fill="rgba(245,245,245,0.9)" textLength="234" lengthAdjust="spacingAndGlyphs">Download Free Your Desired App</text>
</svg>

</body></html>
